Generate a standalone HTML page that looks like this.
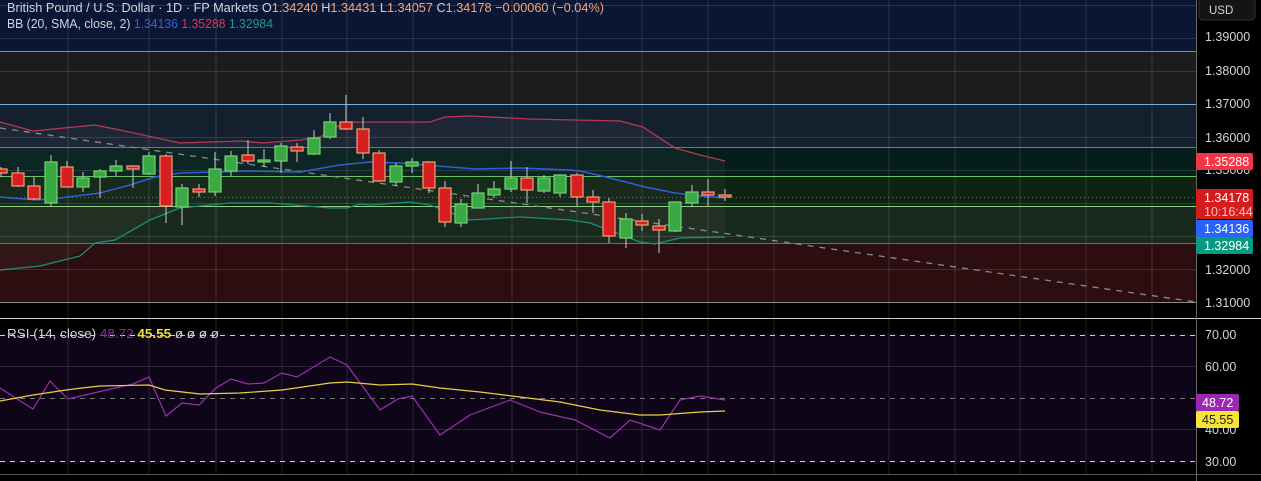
<!DOCTYPE html>
<html><head><meta charset="utf-8"><style>
html,body{margin:0;padding:0;background:#000;width:1261px;height:481px;overflow:hidden;font-family:"Liberation Sans",sans-serif}
svg{display:block}
</style></head><body>
<svg width="1261" height="481" xmlns="http://www.w3.org/2000/svg" font-family="Liberation Sans, sans-serif">
<rect width="1261" height="481" fill="#000"/>
<rect x="0" y="0" width="1196" height="51" fill="#0a1633"/>
<rect x="0" y="51" width="1196" height="53" fill="#1c1c1e"/>
<rect x="0" y="104" width="1196" height="43" fill="#15202f"/>
<rect x="0" y="147" width="1196" height="29" fill="#051e1b"/>
<rect x="0" y="176" width="1196" height="30" fill="#0f2313"/>
<rect x="0" y="206" width="1196" height="37" fill="#1a291d"/>
<rect x="0" y="243" width="1196" height="59" fill="#2c0e10"/>
<rect x="0" y="333" width="1196" height="131" fill="#0f0519"/>
<polygon points="0,122 33,131 95,125 120,130 180,143 240,141 263,143 300,140 320,137 345,122 430,122 445,117 470,116 530,119 620,121 643,127 675,148 700,155 725,161 725,237 680,238 655,244 640,242 590,223 570,220 520,217 470,220 430,205 410,202 370,205 347,208 330,208 270,203 230,203 200,206 180,208 150,220 115,240 95,243 60,262 30,268 0,272" fill="#ffffff" fill-opacity="0.035"/>
<g stroke="#ffffff" stroke-opacity="0.13" stroke-width="1">
<path d="M68 0V474M149 0V474M216 0V474M282 0V474M347 0V474M413 0V474M512 0V474M577 0V474M642 0V474M708 0V474M774 0V474M889 0V474M955 0V474M1020 0V474M1086 0V474M1152 0V474"/>
<path d="M0 5.5H1196M0 38.5H1196M0 71.5H1196M0 137.5H1196M0 170.5H1196M0 203.5H1196M0 236.5H1196M0 269.5H1196M0 366.5H1196M0 429.5H1196"/>
</g>
<path d="M0 51.5H1196" stroke="#8a8a8a"/>
<path d="M0 104.5H1196" stroke="#6fb4e8"/>
<path d="M0 147.5H1196" stroke="#2a9c86"/>
<path d="M0 176.5H1196" stroke="#6cc06a"/>
<path d="M0 206.5H1196" stroke="#8fcf8a"/>
<path d="M0 243.5H1196" stroke="#c8454a"/>
<path d="M0 302.5H1196" stroke="#8a8a8a"/>
<path d="M0 318.5H1261" stroke="#d0d0d0"/>
<path d="M0 474.5H1261" stroke="#555"/>
<path d="M1196.5 0V481" stroke="#666"/>
<path d="M0 128L1196 302" stroke="#8a8a8a" stroke-width="1.3" stroke-dasharray="6 6"/>
<path d="M0 197.5H1196" stroke="#d8452e" stroke-width="1" stroke-dasharray="1 3"/>
<polyline fill="none" stroke="#b8384f" stroke-width="1.3" points="0,122 33,131 95,125 120,130 180,143 240,141 263,143 300,140 320,137 345,122 430,122 445,117 470,116 530,119 620,121 643,127 675,148 700,155 725,161"/>
<polyline fill="none" stroke="#2e5fd8" stroke-width="1.5" points="0,197 37,200 60,198 100,193 130,185 155,177 180,173 250,171 300,172 340,165 370,162 400,163 475,169 520,168 570,170 585,172 610,178 645,187 675,193 700,196 725,198"/>
<polyline fill="none" stroke="#1e8c78" stroke-width="1.3" points="0,270 40,266 80,256 95,243 115,240 150,220 180,208 200,206 230,203 270,203 330,208 347,208 360,204 370,205 410,202 430,205 470,220 520,217 570,220 590,223 640,242 655,244 680,238 725,237"/>
<g stroke="#c9c9c9" stroke-width="1">
<path d="M1 167V177M18 167V187M34 177V200M51 155V206M67 161V187M83 172V192M100 169V198M116 160V176M133 165V188M149 152V175M166 154V223M182 184V225M199 184V197M215 152V196M231 151V176M248 140V164M264 149V167M281 143V173M297 143V162M314 130V155M330 113V139M346 95V130M363 117V159M379 150V182M396 163V186M412 158V173M429 161V193M445 181V227M461 199V227M478 184V208M494 181V198M511 161V192M527 167V203M544 175V193M560 174V197M577 173V206M593 190V213M609 198V243M626 213V248M642 214V231M659 219V253M675 202V232M692 185V207M708 179V206M725 189V201"/>
</g>
<g fill="#d81f1f" stroke="#f0a07a" stroke-width="1.2">
<rect x="-5" y="169" width="12" height="4"/>
<rect x="12" y="173" width="12" height="13"/>
<rect x="28" y="186" width="12" height="13"/>
<rect x="61" y="167" width="12" height="20"/>
<rect x="127" y="166" width="12" height="3"/>
<rect x="160" y="156" width="12" height="50"/>
<rect x="193" y="189" width="12" height="3"/>
<rect x="242" y="155" width="12" height="6"/>
<rect x="291" y="147" width="12" height="4"/>
<rect x="340" y="122" width="12" height="7"/>
<rect x="357" y="129" width="12" height="24"/>
<rect x="373" y="153" width="12" height="28"/>
<rect x="423" y="162" width="12" height="26"/>
<rect x="439" y="188" width="12" height="34"/>
<rect x="521" y="178" width="12" height="12"/>
<rect x="571" y="175" width="12" height="22"/>
<rect x="587" y="197" width="12" height="5"/>
<rect x="603" y="202" width="12" height="34"/>
<rect x="636" y="221" width="12" height="4"/>
<rect x="653" y="226" width="12" height="4"/>
<rect x="702" y="192" width="12" height="3"/>
<rect x="719" y="195" width="12" height="2"/>
</g>
<g fill="#3aa843" stroke="#72d474" stroke-width="1.2">
<rect x="45" y="162" width="12" height="41"/>
<rect x="77" y="178" width="12" height="9"/>
<rect x="94" y="171" width="12" height="6"/>
<rect x="110" y="166" width="12" height="5"/>
<rect x="143" y="156" width="12" height="18"/>
<rect x="176" y="188" width="12" height="19"/>
<rect x="209" y="169" width="12" height="23"/>
<rect x="225" y="156" width="12" height="15"/>
<rect x="258" y="160" width="12" height="2"/>
<rect x="275" y="146" width="12" height="15"/>
<rect x="308" y="138" width="12" height="16"/>
<rect x="324" y="122" width="12" height="15"/>
<rect x="390" y="166" width="12" height="16"/>
<rect x="406" y="162" width="12" height="4"/>
<rect x="455" y="204" width="12" height="19"/>
<rect x="472" y="193" width="12" height="15"/>
<rect x="488" y="189" width="12" height="6"/>
<rect x="505" y="178" width="12" height="11"/>
<rect x="538" y="178" width="12" height="13"/>
<rect x="554" y="175" width="12" height="18"/>
<rect x="620" y="219" width="12" height="19"/>
<rect x="669" y="202" width="12" height="29"/>
<rect x="686" y="192" width="12" height="11"/>
</g>
<g stroke="#d0d0d0" stroke-width="1" stroke-dasharray="5 5">
<path d="M0 335.5H1196M0 461.5H1196"/>
</g>
<path d="M0 398.5H1196" stroke="#777" stroke-dasharray="5 5"/>
<polyline fill="none" stroke="#9b2fb0" stroke-width="1.2" points="0,388 33,409 50,381 68,399 115,388 133,384 149,377 166,416 182,403 199,405 216,388 231,379 248,384 264,383 282,373 297,377 330,357 347,365 380,410 398,399 412,396 440,435 470,415 510,400 540,412 575,420 610,438 630,420 660,430 680,400 700,396 725,400"/>
<polyline fill="none" stroke="#e8d040" stroke-width="1.2" points="0,401 33,395 66,390 82,388 100,386 149,385 165,390 200,394 240,393 282,390 330,383 347,382 380,385 412,384 440,388 480,392 520,397 560,402 600,410 640,415 660,415 700,412 725,411"/>
<g font-size="13">
<text x="7" y="12" fill="#d1d4dc" textLength="597" lengthAdjust="spacingAndGlyphs">British Pound / U.S. Dollar · 1D · FP Markets  O<tspan fill="#f7a57a">1.34240</tspan>  H<tspan fill="#f7a57a">1.34431</tspan>  L<tspan fill="#f7a57a">1.34057</tspan>  C<tspan fill="#f7a57a">1.34178</tspan>  <tspan fill="#f7a57a">−0.00060 (−0.04%)</tspan></text>
<text x="7" y="28" fill="#d1d4dc" textLength="266" lengthAdjust="spacingAndGlyphs">BB (20, SMA, close, 2)  <tspan fill="#2e62e0">1.34136</tspan>  <tspan fill="#e0384f">1.35288</tspan>  <tspan fill="#1e9c84">1.32984</tspan></text>
<text x="7" y="338" fill="#d1d4dc" textLength="212" lengthAdjust="spacingAndGlyphs">RSI (14, close)  <tspan fill="#8e2aa4">48.72</tspan>  <tspan fill="#f2dc3a" font-weight="bold">45.55</tspan>  ø  ø  ø  ø</text>
</g>
<rect x="1199" y="-2" width="56" height="22" rx="4" fill="#141414" stroke="#333"/>
<text x="1209" y="14" font-size="11.5" fill="#d1d4dc">USD</text>
<g font-size="12.5" fill="#d1d4dc">
<text x="1205" y="41">1.39000</text>
<text x="1205" y="75">1.38000</text>
<text x="1205" y="108">1.37000</text>
<text x="1205" y="142">1.36000</text>
<text x="1205" y="174">1.35000</text>
<text x="1205" y="274">1.32000</text>
<text x="1205" y="307">1.31000</text>
<text x="1205" y="339">70.00</text>
<text x="1205" y="371">60.00</text>
<text x="1205" y="434">40.00</text>
<text x="1205" y="466">30.00</text>
</g>
<rect x="1196" y="153" width="57" height="17" rx="2" fill="#f23645"/>
<text x="1204" y="166" font-size="12.5" fill="#fff">1.35288</text>
<rect x="1196" y="189" width="57" height="30" rx="2" fill="#d31d1d"/>
<text x="1204" y="202" font-size="12.5" fill="#fff">1.34178</text>
<text x="1204" y="216" font-size="12.5" fill="#f5c0c0">10:16:44</text>
<rect x="1196" y="220" width="57" height="17" rx="2" fill="#2962ff"/>
<text x="1204" y="233" font-size="12.5" fill="#fff">1.34136</text>
<rect x="1196" y="237" width="57" height="17" rx="2" fill="#089981"/>
<text x="1204" y="250" font-size="12.5" fill="#fff">1.32984</text>
<rect x="1196" y="394" width="43" height="17" rx="2" fill="#9c27b0"/>
<text x="1202" y="407" font-size="12.5" fill="#fff">48.72</text>
<rect x="1196" y="411" width="43" height="17" rx="2" fill="#f5e23a"/>
<text x="1202" y="424" font-size="12.5" fill="#222">45.55</text>
</svg>
</body></html>
